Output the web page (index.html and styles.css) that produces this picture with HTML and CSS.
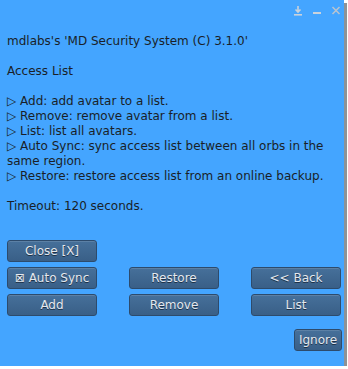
FILE: index.html
```html
<!DOCTYPE html>
<html>
<head>
  <meta charset="UTF-8">
  <title>MD Security System</title>
  <link rel="stylesheet" href="styles.css">
</head>
<body>
  <div class="dialog">
    <div class="titlebar">
      <svg class="tb-icon" width="10" height="11" viewBox="0 0 10 11">
        <path d="M5 1 V7 M2.5 4.5 L5 7 L7.5 4.5" stroke="#c9d2dc" stroke-width="1.6" fill="none"/>
        <rect x="1" y="9" width="8" height="1.6" fill="#c9d2dc"/>
      </svg>
      <svg class="tb-icon" width="10" height="11" viewBox="0 0 10 11">
        <rect x="1" y="7" width="8" height="2" fill="#c9d2dc"/>
      </svg>
      <svg class="tb-icon" width="10" height="11" viewBox="0 0 10 11">
        <path d="M1.5 2 L8.5 9 M8.5 2 L1.5 9" stroke="#b9c3cf" stroke-width="1.5"/>
      </svg>
    </div>
    <div class="message">
      <p>mdlabs's 'MD Security System (C) 3.1.0'</p>
      <p>&nbsp;</p>
      <p>Access List</p>
      <p>&nbsp;</p>
      <p>▷ Add: add avatar to a list.</p>
      <p>▷ Remove: remove avatar from a list.</p>
      <p>▷ List: list all avatars.</p>
      <p>▷ Auto Sync: sync access list between all orbs in the same region.</p>
      <p>▷ Restore: restore access list from an online backup.</p>
      <p>&nbsp;</p>
      <p>Timeout: 120 seconds.</p>
    </div>
    <div class="buttons">
      <button class="btn">Close [X]</button>
      <span></span>
      <span></span>
      <button class="btn">⊠ Auto Sync</button>
      <button class="btn">Restore</button>
      <button class="btn">&lt;&lt; Back</button>
      <button class="btn">Add</button>
      <button class="btn">Remove</button>
      <button class="btn">List</button>
    </div>
    <div class="footer">
      <button class="btn ignore">Ignore</button>
    </div>
  </div>
</body>
</html>
```

FILE: styles.css
```css
body {
  margin: 0;
  background-color: #ffffff;
  font-family: 'DejaVu Sans', sans-serif;
}
.dialog {
  width: 344px;
  height: 366px;
  background-color: #44a5ff;
  box-shadow: 3px 3px 0 #8e9296;
  display: flex;
  flex-direction: column;
  color: #1a1f28;
}
.titlebar {
  height: 20px;
  display: flex;
  justify-content: flex-end;
  align-items: center;
  gap: 9px;
  padding: 0 3px 0 0;
}
.tb-icon {
  display: block;
}
.message {
  padding: 14px 7px 0 7px;
  font-size: 12px;
  line-height: 15px;
  height: 206px;
}
.message p {
  margin: 0;
}
.buttons {
  display: grid;
  grid-template-columns: 90px 90px 90px;
  column-gap: 32px;
  row-gap: 5px;
  padding: 0 0 0 7px;
}
.btn {
  height: 22px;
  padding: 0;
  border: 1px solid #2d4b6c;
  border-radius: 3px;
  background: linear-gradient(#46709a, #395f87);
  color: #e4e9ef;
  font-family: 'DejaVu Sans', sans-serif;
  font-size: 12px;
  text-shadow: 0 1px 0 #1d3147;
  box-shadow: inset 0 1px 0 rgba(255, 255, 255, 0.12);
  cursor: pointer;
}
.footer {
  display: flex;
  justify-content: flex-end;
  padding: 13px 2px 0 0;
}
.ignore {
  width: 48px;
}
```
